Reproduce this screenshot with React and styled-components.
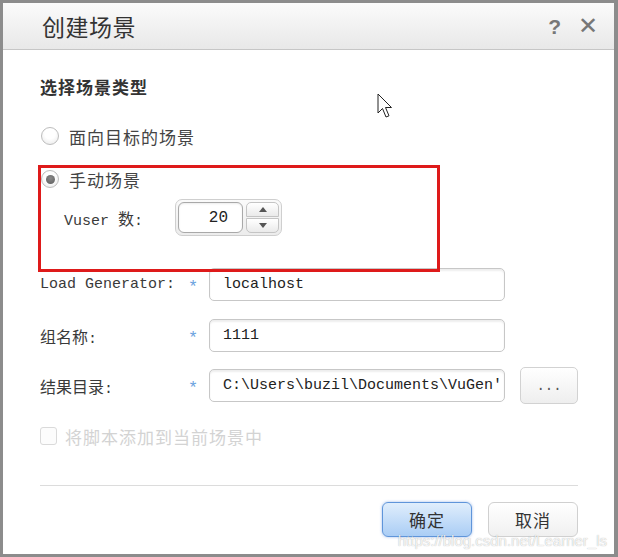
import React from 'react';
import styled, { createGlobalStyle } from 'styled-components';

const GlobalStyle = createGlobalStyle`
  html, body { margin: 0; padding: 0; background: #fff; }
  * { box-sizing: border-box; }
`;

const CJK = `"Noto Sans CJK SC", "Noto Sans", sans-serif`;
const MONO = `"Liberation Mono", "Noto Sans CJK SC", monospace`;

const Frame = styled.div`
  position: relative;
  width: 618px;
  height: 557px;
  border: 3px solid #8c8c8c;
  border-right-width: 4px;
  background: #fff;
  overflow: hidden;
`;

const TitleBar = styled.div`
  height: 47px;
  display: flex;
  align-items: center;
  padding: 0 16px 0 39px;
  background: linear-gradient(#fbfbfb, #e8e8e8);
  border-bottom: 1px solid #c6c6c6;
`;

const Title = styled.h1`
  flex: 1;
  margin: 0;
  font-family: ${CJK};
  font-weight: 400;
  font-size: 23px;
  color: #333;
  letter-spacing: 0.5px;
`;

const TitleIcon = styled.span`
  font-family: "Liberation Sans", Arial, sans-serif;
  font-size: ${p => p.$size || 20}px;
  font-weight: ${p => p.$bold ? 700 : 400};
  color: #777;
  margin-left: ${p => p.$ml || 0}px;
  line-height: 1;
`;

const Body = styled.div`
  display: flex;
  flex-direction: column;
  padding: 0 36px 0 37px;
`;

const SectionTitle = styled.div`
  margin-top: 25px;
  line-height: 24px;
  font-family: ${CJK};
  font-weight: 700;
  font-size: 17px;
  letter-spacing: 1px;
  color: #333;
`;

const RadioRow = styled.label`
  display: flex;
  align-items: center;
  height: 24px;
  margin-top: ${p => p.$mt}px;
  margin-left: 1px;
  font-family: ${CJK};
  font-size: 17px;
  letter-spacing: 1px;
  color: #444;
`;

const Radio = styled.span`
  width: 18px;
  height: 18px;
  border-radius: 50%;
  border: 1px solid #bdbdbd;
  background: radial-gradient(circle at 50% 35%, #ffffff 40%, #e6e6e6 100%);
  margin-right: 10px;
  display: flex;
  align-items: center;
  justify-content: center;
  &::after {
    content: '';
    display: ${p => p.$checked ? 'block' : 'none'};
    width: 9px;
    height: 9px;
    border-radius: 50%;
    background: radial-gradient(circle at 50% 35%, #8a8a8a, #5c5c5c);
  }
`;

const VuserRow = styled.div`
  display: flex;
  align-items: center;
  height: 37px;
  margin-top: 8px;
  padding-left: 24px;
`;

const MonoLabel = styled.span`
  font-family: ${MONO};
  font-size: 15px;
  color: #3a3a3a;
  white-space: pre;
`;

const CjkText = styled.span`
  font-family: ${CJK};
  font-size: 16px;
`;

const Spinner = styled.div`
  margin-left: ${p => p.$ml}px;
  display: flex;
  gap: 3px;
  padding: 2px;
  border: 1px solid #cfcfcf;
  border-radius: 7px;
  background: linear-gradient(#fafafa, #ececec);
`;

const SpinInput = styled.div`
  width: 65px;
  height: 31px;
  border: 1px solid #a9a9a9;
  border-radius: 6px;
  background: #fff;
  box-shadow: inset 0 1px 2px rgba(0,0,0,0.08);
  display: flex;
  align-items: center;
  justify-content: flex-end;
  padding-right: 14px;
  font-family: ${MONO};
  font-size: 16px;
  color: #222;
`;

const SpinButtons = styled.div`
  display: flex;
  flex-direction: column;
  gap: 1px;
`;

const SpinButton = styled.div`
  width: 33px;
  height: 15px;
  border: 1px solid #c4c4c4;
  border-radius: ${p => p.$up ? '5px 5px 0 0' : '0 0 5px 5px'};
  background: linear-gradient(#ffffff, #eaeaea);
  display: flex;
  align-items: center;
  justify-content: center;
  &::after {
    content: '';
    border-left: 4px solid transparent;
    border-right: 4px solid transparent;
    ${p => p.$up ? 'border-bottom: 5px solid #555;' : 'border-top: 5px solid #555;'}
  }
`;

const FieldRow = styled.div`
  display: grid;
  grid-template-columns: 145px 24px 296px 73px;
  align-items: center;
  margin-top: ${p => p.$mt}px;
`;

const Star = styled.span`
  font-family: "Liberation Sans", sans-serif;
  font-size: 17px;
  color: #6aa2de;
  text-align: center;
  padding-right: 8px;
  padding-top: 5px;
`;

const TextBox = styled.div`
  height: 33px;
  border: 1px solid #c7c7c7;
  border-radius: 5px;
  background: #fff;
  box-shadow: inset 0 2px 2px rgba(0,0,0,0.07);
  display: flex;
  align-items: center;
  padding-left: 13px;
  overflow: hidden;
  white-space: nowrap;
  font-family: ${MONO};
  font-size: 15px;
  color: #222;
`;

const BrowseButton = styled.div`
  margin-left: 15px;
  width: 58px;
  height: 37px;
  border: 1px solid #d2d2d2;
  border-radius: 5px;
  background: linear-gradient(#ffffff, #eeeeee);
  display: flex;
  align-items: center;
  justify-content: center;
  font-family: ${MONO};
  font-size: 14px;
  color: #555;
`;

const CheckRow = styled.label`
  display: flex;
  align-items: center;
  height: 24px;
  margin-top: 20px;
  font-family: ${CJK};
  font-size: 17px;
  letter-spacing: 1px;
  color: #d3d3d3;
`;

const CheckBox = styled.span`
  width: 17px;
  height: 18px;
  border: 1px solid #dadada;
  border-radius: 3px;
  background: #fcfcfc;
  margin-right: 8px;
`;

const Separator = styled.hr`
  margin: 37px 0 0 0;
  border: 0;
  border-top: 1px solid #dcdcdc;
`;

const ButtonRow = styled.div`
  display: flex;
  justify-content: flex-end;
  gap: 16px;
  margin-top: 16px;
`;

const DialogButton = styled.div`
  width: 90px;
  height: 35px;
  border-radius: 6px;
  display: flex;
  align-items: center;
  justify-content: center;
  font-family: ${CJK};
  font-size: 17px;
  color: #333;
  letter-spacing: 1px;
  border: 1px solid ${p => p.$primary ? '#5f95da' : '#d0d0d0'};
  background: ${p => p.$primary
    ? 'linear-gradient(#e0eefc, #aacdf5)'
    : 'linear-gradient(#ffffff, #f0f0f0)'};
  box-shadow: ${p => p.$primary ? '0 0 3px rgba(90,140,220,0.6)' : 'none'};
`;

const Annotation = styled.div`
  position: absolute;
  left: 35px;
  top: 162px;
  width: 402px;
  height: 107px;
  border: 3px solid #de1a1a;
  pointer-events: none;
`;

const Watermark = styled.div`
  position: absolute;
  right: 7px;
  bottom: 5px;
  font-family: "Liberation Sans", Arial, sans-serif;
  font-size: 15px;
  color: rgba(255,255,255,0.85);
  text-shadow: 0 0 1px rgba(0,0,0,0.35);
  pointer-events: none;
`;

const Cursor = styled.svg`
  position: absolute;
  left: 374px;
  top: 90px;
`;

export default function App() {
  return (
    <>
      <GlobalStyle />
      <Frame>
        <TitleBar>
          <Title>创建场景</Title>
          <TitleIcon $size={21} $bold>?</TitleIcon>
          <TitleIcon $size={24} $ml={17}>✕</TitleIcon>
        </TitleBar>
        <Body>
          <SectionTitle>选择场景类型</SectionTitle>
          <RadioRow $mt={25}>
            <Radio />
            面向目标的场景
          </RadioRow>
          <RadioRow $mt={19}>
            <Radio $checked />
            手动场景
          </RadioRow>
          <VuserRow>
            <MonoLabel>Vuser <CjkText>数</CjkText>:</MonoLabel>
            <Spinner $ml={32}>
              <SpinInput>20</SpinInput>
              <SpinButtons>
                <SpinButton $up />
                <SpinButton />
              </SpinButtons>
            </Spinner>
          </VuserRow>
          <FieldRow $mt={32}>
            <MonoLabel>Load Generator:</MonoLabel>
            <Star>*</Star>
            <TextBox>localhost</TextBox>
          </FieldRow>
          <FieldRow $mt={18}>
            <MonoLabel><CjkText>组名称</CjkText>:</MonoLabel>
            <Star>*</Star>
            <TextBox>1111</TextBox>
          </FieldRow>
          <FieldRow $mt={15}>
            <MonoLabel><CjkText>结果目录</CjkText>:</MonoLabel>
            <Star>*</Star>
            <TextBox>C:\Users\buzil\Documents\VuGen'</TextBox>
            <BrowseButton>...</BrowseButton>
          </FieldRow>
          <CheckRow>
            <CheckBox />
            将脚本添加到当前场景中
          </CheckRow>
          <Separator />
          <ButtonRow>
            <DialogButton $primary>确定</DialogButton>
            <DialogButton>取消</DialogButton>
          </ButtonRow>
        </Body>
        <Annotation />
        <Cursor width="16" height="30" viewBox="0 0 16 30">
          <path d="M1 1 L1 20 L5.5 15.5 L9 24 L12 22.8 L8.5 14.5 L14.5 14.5 Z"
            fill="#fff" stroke="#222" strokeWidth="1" strokeLinejoin="miter" />
        </Cursor>
        <Watermark>https://blog.csdn.net/Learner_ls</Watermark>
      </Frame>
    </>
  );
}
